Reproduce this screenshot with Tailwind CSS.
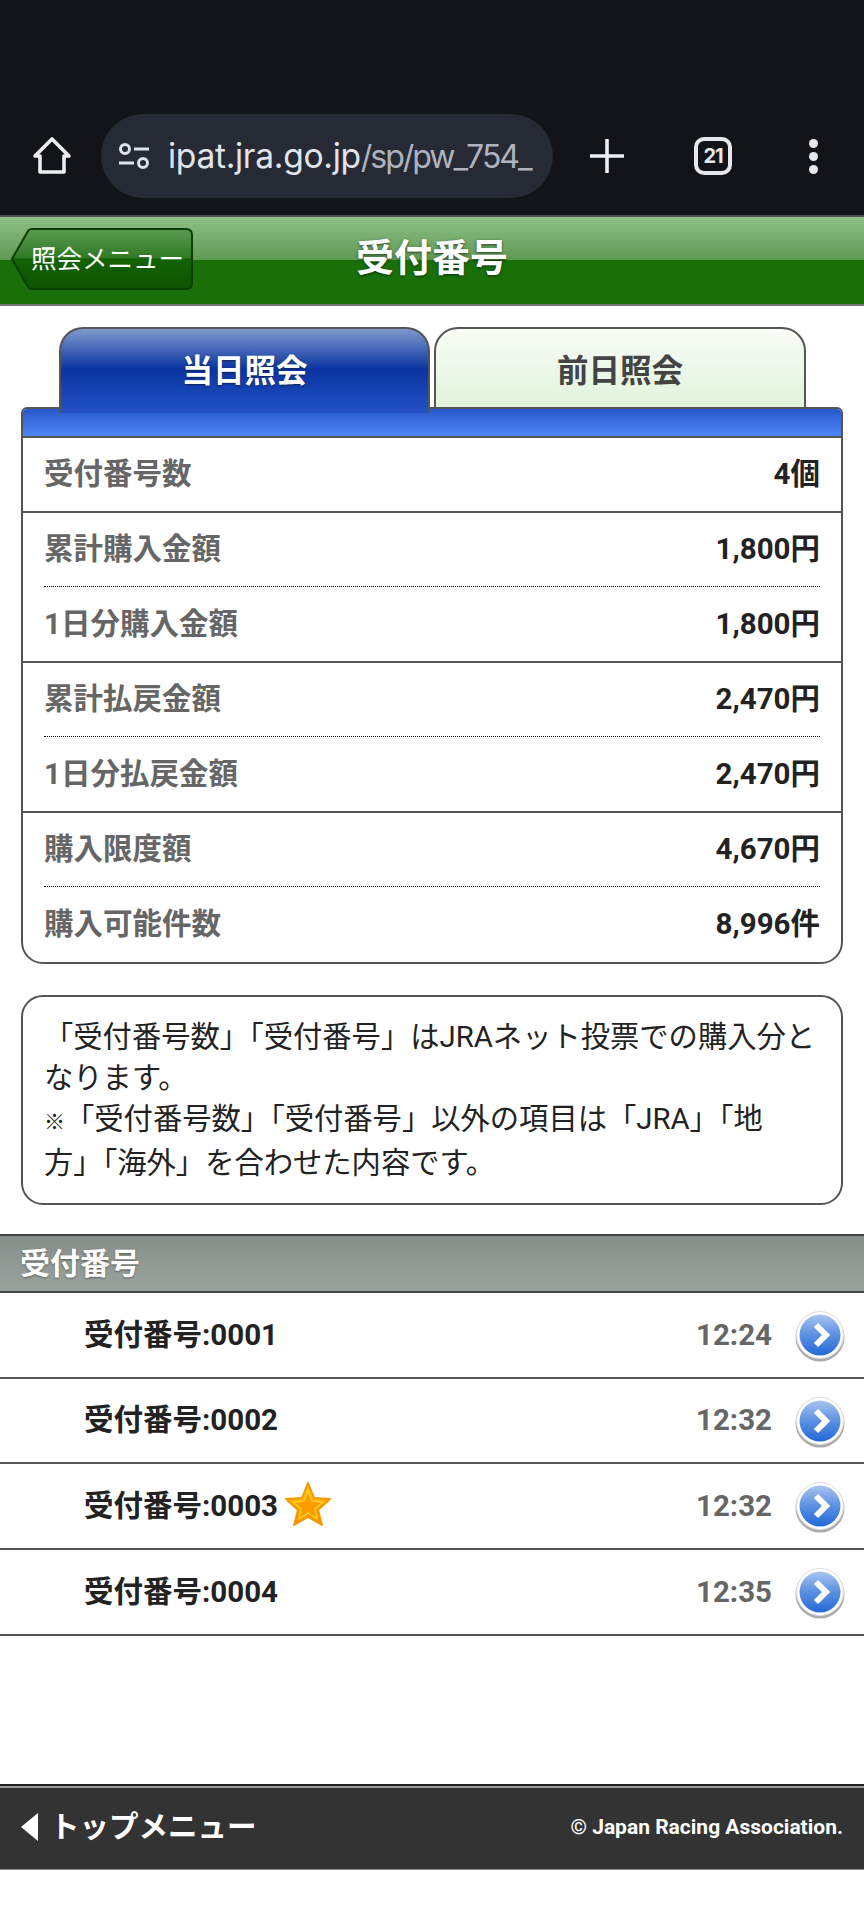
<!DOCTYPE html>
<html lang="ja">
<head>
  <meta charset="UTF-8" />
  <title>受付番号</title>
  <script src="https://cdn.jsdelivr.net/npm/@tailwindcss/browser@4"></script>
</head>
<body class="bg-white [font-family:Roboto,'Noto_Sans_CJK_JP',sans-serif] text-[29.5px] text-[#222]">
  <div class="w-[864px] h-[1920px] overflow-hidden">

    <!-- browser bar -->
    <div class="h-[215px] bg-[#12141a] pt-[114px] flex items-start">
      <div class="h-[84px] flex items-center">
        <svg class="ml-[32px] w-[40px] h-[40px]" viewBox="0 0 40 40" fill="none" stroke="#eceef2" stroke-width="3.6" stroke-linejoin="round"><path d="M20 3 L37 20 H32 V36 H8 V20 H3 Z"/></svg>
        <div class="ml-[29px] w-[452px] h-[84px] rounded-full bg-[#262a35] flex items-center">
          <svg class="ml-[17px] w-[32px] h-[26px]" viewBox="0 0 32 26" fill="none" stroke="#dfe2ea" stroke-width="3"><circle cx="7" cy="6" r="4.5"/><path d="M16 6 H31"/><path d="M1 20 H16"/><circle cx="25" cy="20" r="4.5"/></svg>
          <div class="ml-[18px] w-[372px] whitespace-nowrap [font-family:Inter,sans-serif] text-[33.6px] tracking-[-0.3px] text-[#e2e4ec]">ipat.jra.go.jp<span class="text-[#b0b3bf] text-[32px] tracking-[-2px]">/sp/pw_754_</span></div>
        </div>
        <svg class="ml-[37px] w-[34px] h-[34px]" viewBox="0 0 34 34" stroke="#eceef2" stroke-width="3.6"><path d="M17 0 V34 M0 17 H34"/></svg>
        <div class="ml-[70px] w-[38px] h-[38px] rounded-[10px] border-[4px] border-[#e6e8ee] flex items-center justify-center [font-family:Inter,sans-serif] text-[#e6e8ee] text-[20px] font-bold tracking-[-1px]">21</div>
        <div class="ml-[77px] flex flex-col gap-[4px]">
          <div class="w-[9px] h-[9px] rounded-full bg-[#e6e8ee]"></div>
          <div class="w-[9px] h-[9px] rounded-full bg-[#e6e8ee]"></div>
          <div class="w-[9px] h-[9px] rounded-full bg-[#e6e8ee]"></div>
        </div>
      </div>
    </div>

    <!-- page header -->
    <div class="relative h-[91px] pb-[4px] border-t-[2px] border-b-[2px] border-t-[#4b4f55] border-b-[#777] bg-[linear-gradient(#8fbf85_0%,#5f9a55_49%,#1a7008_50%,#1a7008_100%)] flex items-center justify-center">
      <div class="absolute left-[11px] top-[11px] w-[183px] h-[63px]">
        <svg class="absolute inset-0" width="183" height="63" viewBox="0 0 183 63">
          <defs>
            <linearGradient id="backBtn" x1="0" y1="0" x2="0" y2="1">
              <stop offset="0" stop-color="#5b9a52"/>
              <stop offset="0.48" stop-color="#2f7a24"/>
              <stop offset="0.5" stop-color="#126203"/>
              <stop offset="1" stop-color="#0d5300"/>
            </linearGradient>
          </defs>
          <path d="M1 31 L17 3 Q18 1 21 1 H175 Q181 1 181 7 V55 Q181 61 175 61 H21 Q18 61 17 59 Z" fill="url(#backBtn)" stroke="#0c3d05" stroke-width="2"/>
        </svg>
        <div class="absolute left-[20px] top-0 h-[63px] flex items-center text-[25.5px] text-white whitespace-nowrap">照会メニュー</div>
      </div>
      <h1 class="text-[38px] font-bold text-white [text-shadow:0_1px_3px_rgba(0,0,0,0.6)]">受付番号</h1>
    </div>

    <!-- tabs -->
    <div class="pt-[21px] px-[21px]">
      <div class="h-[82px] pl-[38px] flex items-start">
        <div class="relative z-10 w-[371px] h-[86px] rounded-t-[24px] border-[2px] border-b-0 border-[#555] bg-[linear-gradient(#8098cc_0%,#0a35a0_48%,#2252c6_100%)] flex items-start justify-center pt-[19px] text-[31.5px] font-bold text-white [text-shadow:0_1px_2px_rgba(0,0,0,0.5)]">当日照会</div>
        <div class="ml-[4px] w-[372px] h-[82px] rounded-t-[24px] border-[2px] border-[#555] bg-[linear-gradient(#f8fcf6,#e1f3dc)] flex items-start justify-center pt-[19px] text-[31.5px] font-bold text-[#444]">前日照会</div>
      </div>

      <!-- summary panel -->
      <div class="border-[2px] border-[#555] rounded-t-[6px] rounded-b-[22px] w-[822px] -mt-[2px] overflow-hidden">
        <div class="h-[29px] border-b-[2px] border-[#555] bg-[linear-gradient(#2658cc,#4f86f7)]"></div>
        <div class="h-[75px] px-[21px] flex items-center justify-between border-b-[2px] border-[#555]">
          <span class="font-bold text-[#666]">受付番号数</span><span class="font-bold">4個</span>
        </div>
        <div class="border-b-[2px] border-[#555] px-[21px]">
          <div class="h-[74px] flex items-center justify-between border-b-[1px] border-dotted border-black">
            <span class="font-bold text-[#666]">累計購入金額</span><span class="font-bold">1,800円</span>
          </div>
          <div class="h-[74px] flex items-center justify-between">
            <span class="font-bold text-[#666]">1日分購入金額</span><span class="font-bold">1,800円</span>
          </div>
        </div>
        <div class="border-b-[2px] border-[#555] px-[21px]">
          <div class="h-[74px] flex items-center justify-between border-b-[1px] border-dotted border-black">
            <span class="font-bold text-[#666]">累計払戻金額</span><span class="font-bold">2,470円</span>
          </div>
          <div class="h-[74px] flex items-center justify-between">
            <span class="font-bold text-[#666]">1日分払戻金額</span><span class="font-bold">2,470円</span>
          </div>
        </div>
        <div class="px-[21px]">
          <div class="h-[74px] flex items-center justify-between border-b-[1px] border-dotted border-black">
            <span class="font-bold text-[#666]">購入限度額</span><span class="font-bold">4,670円</span>
          </div>
          <div class="h-[75px] flex items-center justify-between">
            <span class="font-bold text-[#666]">購入可能件数</span><span class="font-bold">8,996件</span>
          </div>
        </div>
      </div>

      <!-- note -->
      <div class="mt-[31px] w-[822px] h-[210px] border-[2px] border-[#555] rounded-[22px] px-[21px] pt-[20px] text-[29.3px] leading-[41px]">
        「受付番号数」「受付番号」はJRAネット投票での購入分となります。<br /><span class="text-[21px]">※</span>「受付番号数」「受付番号」以外の項目は「JRA」「地<br />方」「海外」を合わせた内容です。
      </div>
    </div>

    <!-- list -->
    <div class="mt-[29px] h-[59px] border-t-[2px] border-b-[2px] border-t-[#444] border-b-[#444] bg-[linear-gradient(#868e89,#9aa39d)] px-[20px] flex items-center text-[30px] font-bold text-white [text-shadow:0_1px_2px_rgba(0,0,0,0.4)]">受付番号</div>

    <div class="h-[85.7px] border-b-[2px] border-[#555] pl-[84px] pr-[18px] flex items-center font-bold">
      <span>受付番号:0001</span>
      <span class="ml-auto text-[#666]">12:24</span>
      <svg class="ml-[22px] mt-[2px] w-[52px] h-[52px]" viewBox="0 0 52 52">
        <defs>
          <linearGradient id="goBtn" x1="0" y1="0" x2="0" y2="1"><stop offset="0" stop-color="#a9c5ef"/><stop offset="0.5" stop-color="#5b90e2"/><stop offset="1" stop-color="#2469d8"/></linearGradient>
        </defs>
        <circle cx="26" cy="27" r="24.5" fill="#444" opacity="0.45"/>
        <circle cx="26" cy="25" r="23.5" fill="#fff" stroke="#ddd" stroke-width="1"/>
        <circle cx="26" cy="25" r="20.5" fill="url(#goBtn)"/>
        <path d="M22 15 L32 25 L22 35" fill="none" stroke="#fff" stroke-width="6"/>
      </svg>
    </div>
    <div class="h-[85.7px] border-b-[2px] border-[#555] pl-[84px] pr-[18px] flex items-center font-bold">
      <span>受付番号:0002</span>
      <span class="ml-auto text-[#666]">12:32</span>
      <svg class="ml-[22px] mt-[2px] w-[52px] h-[52px]" viewBox="0 0 52 52">
        <circle cx="26" cy="27" r="24.5" fill="#444" opacity="0.45"/>
        <circle cx="26" cy="25" r="23.5" fill="#fff" stroke="#ddd" stroke-width="1"/>
        <circle cx="26" cy="25" r="20.5" fill="url(#goBtn)"/>
        <path d="M22 15 L32 25 L22 35" fill="none" stroke="#fff" stroke-width="6"/>
      </svg>
    </div>
    <div class="h-[85.7px] border-b-[2px] border-[#555] pl-[84px] pr-[18px] flex items-center font-bold">
      <span>受付番号:0003</span>
      <svg class="ml-[6px] -mt-[4px] w-[48px] h-[46px]" viewBox="0 0 48 46">
        <defs>
          <linearGradient id="star" x1="0" y1="0" x2="0" y2="1"><stop offset="0" stop-color="#ffc414"/><stop offset="1" stop-color="#fb8c00"/></linearGradient>
        </defs>
        <path d="M24 2 L30 17 L46 18 L34 29 L38 44 L24 36 L10 44 L14 29 L2 18 L18 17 Z" fill="url(#star)" stroke="#f59a00" stroke-width="2" stroke-linejoin="round"/>
        <path d="M24 10 L28 20 L39 21 L31 28 L33 38 L24 32 L15 38 L17 28 L9 21 L20 20 Z" fill="#fb9c00" stroke="#ffd21e" stroke-width="1.5" stroke-linejoin="round"/>
      </svg>
      <span class="ml-auto text-[#666]">12:32</span>
      <svg class="ml-[22px] mt-[2px] w-[52px] h-[52px]" viewBox="0 0 52 52">
        <circle cx="26" cy="27" r="24.5" fill="#444" opacity="0.45"/>
        <circle cx="26" cy="25" r="23.5" fill="#fff" stroke="#ddd" stroke-width="1"/>
        <circle cx="26" cy="25" r="20.5" fill="url(#goBtn)"/>
        <path d="M22 15 L32 25 L22 35" fill="none" stroke="#fff" stroke-width="6"/>
      </svg>
    </div>
    <div class="h-[85.7px] border-b-[2px] border-[#555] pl-[84px] pr-[18px] flex items-center font-bold">
      <span>受付番号:0004</span>
      <span class="ml-auto text-[#666]">12:35</span>
      <svg class="ml-[22px] mt-[2px] w-[52px] h-[52px]" viewBox="0 0 52 52">
        <circle cx="26" cy="27" r="24.5" fill="#444" opacity="0.45"/>
        <circle cx="26" cy="25" r="23.5" fill="#fff" stroke="#ddd" stroke-width="1"/>
        <circle cx="26" cy="25" r="20.5" fill="url(#goBtn)"/>
        <path d="M22 15 L32 25 L22 35" fill="none" stroke="#fff" stroke-width="6"/>
      </svg>
    </div>

    <!-- footer -->
    <div class="mt-[148px] h-[86px] border-t-[2px] border-[#222] shadow-[inset_0_2px_0_#999] border-b-[1px] border-b-[#888] bg-[#333] pl-[21px] pr-[21px] flex items-center">
      <div class="w-0 h-0 border-y-[14px] border-y-transparent border-r-[17px] border-r-white"></div>
      <span class="ml-[12px] font-bold text-white">トップメニュー</span>
      <span class="ml-auto text-[21px] font-bold text-white">© Japan Racing Association.</span>
    </div>
  </div>
</body>
</html>
